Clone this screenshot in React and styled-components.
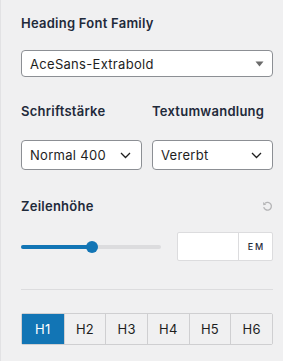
import styled, { createGlobalStyle } from "styled-components";

const Global = createGlobalStyle`
  body {
    margin: 0;
    background: #f0f0f1;
    font-family: Inter, "Noto Sans", sans-serif;
  }
`;

const Panel = styled.div`
  width: 283px;
  height: 361px;
  box-sizing: border-box;
  padding: 15px 10px 0 20px;
  background: #f0f0f1;
  border-left: 1px solid #e2e2e4;
`;

const Label = styled.div`
  font-size: 13px;
  font-weight: 600;
  letter-spacing: 0.25px;
  color: #1f2a3a;
  line-height: 16px;
`;

const Section = styled.div`
  margin-top: ${props => props.top || 0}px;
`;

const Select = styled.div`
  display: flex;
  align-items: center;
  justify-content: space-between;
  box-sizing: border-box;
  height: ${props => props.h || 30}px;
  padding: 0 ${props => props.pr || 10}px 0 8px;
  background: #fff;
  border: 1px solid #8c8f94;
  border-radius: 4px;
  font-size: 13px;
  letter-spacing: 0.3px;
  color: #1e1e1e;
`;

const Row = styled.div`
  display: grid;
  grid-template-columns: 1fr 1fr;
  column-gap: 10px;
`;

const Col = styled.div`
  display: flex;
  flex-direction: column;
  gap: 21px;
`;

const LabelRow = styled.div`
  display: flex;
  justify-content: space-between;
  align-items: center;
`;

const SliderRow = styled.div`
  display: flex;
  align-items: center;
  justify-content: space-between;
`;

const Track = styled.div`
  position: relative;
  width: 140px;
  height: 4px;
  border-radius: 2px;
  background: #dcdcde;
`;

const Fill = styled.div`
  height: 4px;
  border-radius: 2px;
  background: #1275b5;
`;

const Thumb = styled.div`
  position: absolute;
  top: -4px;
  width: 12px;
  height: 12px;
  margin-left: -6px;
  border-radius: 50%;
  background: #1275b5;
`;

const UnitInput = styled.div`
  display: flex;
  box-sizing: border-box;
  width: 96px;
  height: 29px;
  background: #fff;
  border: 1px solid #dcdcde;
  border-radius: 2px;
`;

const InputField = styled.div`
  flex: 1;
  border-right: 1px solid #dcdcde;
`;

const Unit = styled.div`
  width: 31px;
  display: flex;
  align-items: center;
  justify-content: center;
  font-size: 9px;
  font-weight: 500;
  letter-spacing: 2px;
  padding-left: 2px;
  color: #1f2a3a;
`;

const Divider = styled.hr`
  margin: 0;
  border: none;
  border-top: 1px solid #dcdcde;
`;

const Tabs = styled.div`
  display: grid;
  grid-template-columns: repeat(6, 1fr);
  width: 252px;
  box-sizing: border-box;
  border: 1px solid #cfcfd1;
  border-radius: 2px;
`;

const Tab = styled.div`
  height: 30px;
  display: flex;
  align-items: center;
  justify-content: center;
  font-size: 13px;
  letter-spacing: 0.3px;
  color: ${props => (props.active ? "#fff" : "#1e1e1e")};
  background: ${props => (props.active ? "#1275b5" : "#f0f0f1")};
  border-left: ${props => (props.first ? "none" : "1px solid #cfcfd1")};
`;

const Caret = () => (
  <svg width="9" height="6" viewBox="0 0 9 6">
    <path d="M0.5 0.5h8L4.5 5.5z" fill="#6b6b6b" />
  </svg>
);

const Chevron = () => (
  <svg width="11" height="7" viewBox="0 0 11 7">
    <path d="M1 1l4.5 4.5L10 1" fill="none" stroke="#1e1e1e" strokeWidth="1.3" />
  </svg>
);

const Reset = () => (
  <svg width="11" height="11" viewBox="0 0 12 12">
    <path
      d="M3.2 2.6A4.2 4.2 0 1 1 1.9 6.6"
      fill="none"
      stroke="#b4b4b6"
      strokeWidth="1.4"
    />
    <path d="M1.2 1.2l0.2 3.4 3.2-0.6z" fill="#b4b4b6" />
  </svg>
);

export default function App() {
  const value = 51;
  return (
    <>
      <Global />
      <Panel>
        <Label>Heading Font Family</Label>
        <Section top={19}>
          <Select h={27} pr={8}>
            AceSans-Extrabold
            <Caret />
          </Select>
        </Section>
        <Section top={26}>
          <Row>
            <Col>
              <Label>Schriftstärke</Label>
              <Select>
                Normal 400
                <Chevron />
              </Select>
            </Col>
            <Col>
              <Label>Textumwandlung</Label>
              <Select>
                Vererbt
                <Chevron />
              </Select>
            </Col>
          </Row>
        </Section>
        <Section top={28}>
          <LabelRow>
            <Label>Zeilenhöhe</Label>
            <Reset />
          </LabelRow>
        </Section>
        <Section top={18}>
          <SliderRow>
            <Track>
              <Fill style={{ width: `${value}%` }} />
              <Thumb style={{ left: `${value}%` }} />
            </Track>
            <UnitInput>
              <InputField />
              <Unit>EM</Unit>
            </UnitInput>
          </SliderRow>
        </Section>
        <Section top={28}>
          <Divider />
        </Section>
        <Section top={23}>
          <Tabs>
            {["H1", "H2", "H3", "H4", "H5", "H6"].map((h, i) => (
              <Tab key={h} active={i === 0} first={i === 0}>
                {h}
              </Tab>
            ))}
          </Tabs>
        </Section>
      </Panel>
    </>
  );
}
